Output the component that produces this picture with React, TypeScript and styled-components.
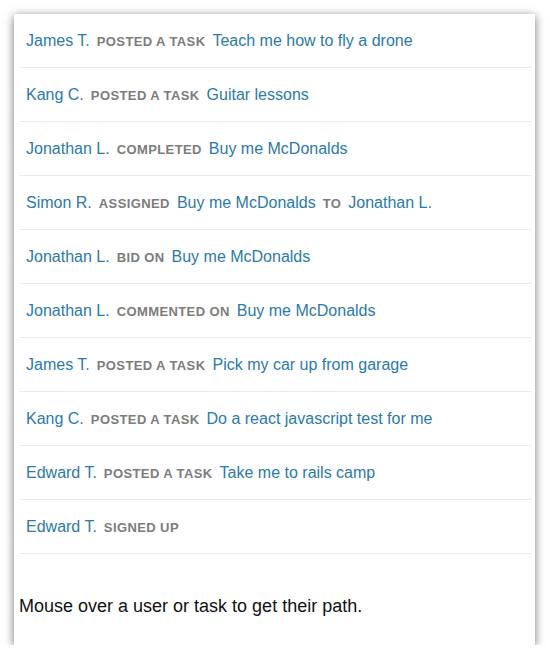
import React from 'react'
import styled, { createGlobalStyle } from 'styled-components'

const GlobalStyle = createGlobalStyle`
  html, body {
    margin: 0;
    padding: 0;
    background: #fff;
  }
  body {
    font-family: "Liberation Sans", Arial, sans-serif;
  }
`

const Page = styled.div`
  padding: 14px 0 0 14px;
`

const Window = styled.div`
  width: 521px;
  height: 631px;
  box-sizing: border-box;
  background: #fff;
  padding: 0 3px 0 5px;
  box-shadow: 0 2px 9px rgba(0, 0, 0, 0.55);
`

const Feed = styled.ul`
  list-style: none;
  margin: 0;
  padding: 0;
`

const Item = styled.li`
  display: flex;
  align-items: baseline;
  gap: 7px;
  height: 53px;
  line-height: 53px;
  padding: 0 7px;
  border-bottom: 1px solid #ececec;
  white-space: nowrap;
`

const Link = styled.a`
  color: #2b7aa8;
  font-size: 16px;
  text-decoration: none;
  cursor: pointer;
`

const Verb = styled.span`
  color: #7c7c7c;
  font-size: 13px;
  font-weight: bold;
  text-transform: uppercase;
  letter-spacing: 0.4px;
`

const Hint = styled.p`
  margin: 42px 0 0;
  font-size: 18px;
  line-height: 20px;
  color: #111;
`

type Activity = {
  user: string
  verb: string
  task?: string
  to?: string
}

const activities: Activity[] = [
  { user: 'James T.', verb: 'posted a task', task: 'Teach me how to fly a drone' },
  { user: 'Kang C.', verb: 'posted a task', task: 'Guitar lessons' },
  { user: 'Jonathan L.', verb: 'completed', task: 'Buy me McDonalds' },
  { user: 'Simon R.', verb: 'assigned', task: 'Buy me McDonalds', to: 'Jonathan L.' },
  { user: 'Jonathan L.', verb: 'bid on', task: 'Buy me McDonalds' },
  { user: 'Jonathan L.', verb: 'commented on', task: 'Buy me McDonalds' },
  { user: 'James T.', verb: 'posted a task', task: 'Pick my car up from garage' },
  { user: 'Kang C.', verb: 'posted a task', task: 'Do a react javascript test for me' },
  { user: 'Edward T.', verb: 'posted a task', task: 'Take me to rails camp' },
  { user: 'Edward T.', verb: 'signed up' },
]

const App = () => {
  return (
    <Page>
      <GlobalStyle />
      <Window>
        <Feed>
          {activities.map((a, i) => (
            <Item key={i}>
              <Link>{a.user}</Link>
              <Verb>{a.verb}</Verb>
              {a.task && <Link>{a.task}</Link>}
              {a.to && <Verb>to</Verb>}
              {a.to && <Link>{a.to}</Link>}
            </Item>
          ))}
        </Feed>
        <Hint>Mouse over a user or task to get their path.</Hint>
      </Window>
    </Page>
  )
}

export default App
